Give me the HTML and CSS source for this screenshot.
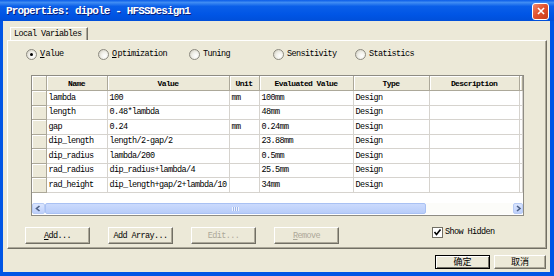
FILE: index.html
```html
<!DOCTYPE html>
<html lang="en">
<head>
<meta charset="UTF-8">
<title>Properties: dipole - HFSSDesign1</title>
<link rel="stylesheet" href="styles.css">
</head>
<body>
    <div class="window">
        <div class="titlebar">
            <span class="title">Properties: dipole - HFSSDesign1</span>
            <span class="close">
                <svg width="16" height="16" viewBox="0 0 16 16">
                    <path d="M4.5 4.5 L11.5 11.5 M11.5 4.5 L4.5 11.5" stroke="#fff" stroke-width="1.8" />
                </svg>
            </span>
        </div>

        <div class="client">
            <div class="tabs">
                <div class="tab">Local Variables</div>
            </div>

            <div class="panel">
                <div class="radios">
                    <label class="radio r1"><span class="dot checked"></span><u>V</u>alue</label>
                    <label class="radio r2"><span class="dot"></span><u>O</u>ptimization</label>
                    <label class="radio r3"><span class="dot"></span>Tuning</label>
                    <label class="radio r4"><span class="dot"></span>Sensitivity</label>
                    <label class="radio"><span class="dot"></span>Statistics</label>
                </div>

                <div class="grid">
                    <table>
                        <colgroup>
                            <col class="c-hdr">
                            <col class="c-name">
                            <col class="c-value">
                            <col class="c-unit">
                            <col class="c-eval">
                            <col class="c-type">
                            <col class="c-desc">
                            <col>
                        </colgroup>
                        <thead>
                            <tr>
                                <th></th>
                                <th>Name</th>
                                <th>Value</th>
                                <th>Unit</th>
                                <th>Evaluated Value</th>
                                <th>Type</th>
                                <th>Description</th>
                                <th></th>
                            </tr>
                        </thead>
                        <tbody>
                            <tr><td class="rh"></td><td>lambda</td><td>100</td><td>mm</td><td>100mm</td><td>Design</td><td></td><td></td></tr>
                            <tr><td class="rh"></td><td>length</td><td>0.48*lambda</td><td></td><td>48mm</td><td>Design</td><td></td><td></td></tr>
                            <tr><td class="rh"></td><td>gap</td><td>0.24</td><td>mm</td><td>0.24mm</td><td>Design</td><td></td><td></td></tr>
                            <tr><td class="rh"></td><td>dip_length</td><td>length/2-gap/2</td><td></td><td>23.88mm</td><td>Design</td><td></td><td></td></tr>
                            <tr><td class="rh"></td><td>dip_radius</td><td>lambda/200</td><td></td><td>0.5mm</td><td>Design</td><td></td><td></td></tr>
                            <tr><td class="rh"></td><td>rad_radius</td><td>dip_radius+lambda/4</td><td></td><td>25.5mm</td><td>Design</td><td></td><td></td></tr>
                            <tr><td class="rh"></td><td>rad_height</td><td>dip_length+gap/2+lambda/10</td><td></td><td>34mm</td><td>Design</td><td></td><td></td></tr>
                        </tbody>
                    </table>
                    <div class="blank"></div>
                    <div class="hscroll">
                        <span class="arrow">
                            <svg width="13" height="11" viewBox="0 0 13 11"><path d="M7.5 3 L4.5 5.5 L7.5 8" fill="none" stroke="#4d6185" stroke-width="1.6" /></svg>
                        </span>
                        <span class="thumb"><span class="grip"></span></span>
                        <span class="track"></span>
                        <span class="arrow right">
                            <svg width="10" height="11" viewBox="0 0 10 11"><path d="M4 3 L7 5.5 L4 8" fill="none" stroke="#4d6185" stroke-width="1.6" /></svg>
                        </span>
                    </div>
                </div>

                <div class="actions">
                    <button class="btn"><u>A</u>dd...</button>
                    <button class="btn">Add Array...</button>
                    <button class="btn" disabled>Edit...</button>
                    <button class="btn" disabled><u>R</u>emove</button>
                    <label class="check"><span class="box">
                        <svg width="9" height="9" viewBox="0 0 9 9"><path d="M1.5 4 L3.5 6.5 L7.5 1.5" fill="none" stroke="#000" stroke-width="1.6" /></svg>
                    </span>Show Hidden</label>
                </div>
            </div>

            <div class="footer">
                <button class="btn default">确定</button>
                <button class="btn cancel">取消</button>
            </div>
        </div>
    </div>
</body>
</html>
```

FILE: styles.css
```css
body {
    margin: 0;
    width: 554px;
    height: 276px;
    overflow: hidden;
    background: #0055e5;
    font-family: "Liberation Mono", "Noto Sans CJK SC", monospace;
    font-size: 8.5px;
    letter-spacing: -0.6px;
    color: #000;
}

.window {
    display: flex;
    flex-direction: column;
    height: 276px;
}

/* title bar */
.titlebar {
    height: 21px;
    flex: none;
    display: flex;
    align-items: center;
    justify-content: space-between;
    padding: 0 5px 0 6px;
    background: linear-gradient(to bottom, #0a5ce8 0%, #3f8cf3 12%, #0a5fe9 30%, #0055e5 70%, #004fd9 100%);
    color: #fff;
}

.title {
    font-size: 11px;
    font-weight: bold;
    letter-spacing: -0.85px;
    text-shadow: 1px 1px 0 #0a1e7a;
}

.close {
    width: 15px;
    height: 15px;
    margin-top: 1px;
    border: 1px solid #fff;
    border-radius: 3px;
    background: linear-gradient(135deg, #f08a6c 0%, #e2522f 45%, #c83a17 100%);
    display: flex;
    align-items: center;
    justify-content: center;
}

.close svg {
    width: 14px;
    height: 14px;
}

/* client area */
.client {
    flex: 1;
    margin: 0 4px 4px 3px;
    background: #ece9d8;
    display: flex;
    flex-direction: column;
}

.tabs {
    padding: 6px 0 0 7px;
    display: flex;
}

.tab {
    height: 12px;
    padding: 0 5px 0 3px;
    line-height: 13px;
    border: 1px solid #fff;
    border-right-color: #716f64;
    border-bottom: none;
    box-shadow: inset -1px 0 #aca899;
}

.panel {
    height: 207px;
    margin: 0 3px 0 4px;
    border: 1px solid #fff;
    border-right-color: #716f64;
    border-bottom-color: #716f64;
    box-shadow: inset -1px -1px #aca899;
    display: flex;
    flex-direction: column;
}

/* option radios */
.radios {
    display: flex;
    margin-top: 8px;
    padding-left: 18px;
    height: 11px;
}

.radio {
    display: flex;
    align-items: center;
    gap: 1px;
    line-height: 11px;
}

.r1 { width: 72px; }
.r2 { width: 91px; }
.r3 { width: 84px; }
.r4 { width: 82px; }

.dot {
    width: 9px;
    height: 9px;
    margin-right: 2px;
    border: 1px solid #8c8a80;
    border-radius: 50%;
    background: radial-gradient(circle at 65% 65%, #fff 0%, #f0efe8 45%, #c9c6b8 100%);
    position: relative;
}

.dot.checked::after {
    content: "";
    position: absolute;
    left: 3px;
    top: 3px;
    width: 3px;
    height: 3px;
    border-radius: 50%;
    background: #000;
}

/* grid */
.grid {
    margin: 15px 0 0 23px;
    width: 491px;
    height: 139px;
    border: 1px solid #8e8c84;
    background: #fff;
    display: flex;
    flex-direction: column;
}

table {
    border-collapse: collapse;
    table-layout: fixed;
    width: 491px;
}

.c-hdr { width: 14px; }
.c-name { width: 61px; }
.c-value { width: 122px; }
.c-unit { width: 30px; }
.c-eval { width: 94px; }
.c-type { width: 76px; }
.c-desc { width: 90px; }

th {
    height: 14px;
    padding: 0;
    font-weight: bold;
    font-size: 8px;
    background: #ece9d8;
    border-right: 1px solid #aca899;
    border-bottom: 1px solid #aca899;
    box-shadow: inset 1px 1px #fff;
    text-align: center;
}

td {
    height: 13.5px;
    padding: 0 0 0 2px;
    border-right: 1px solid #d6d3ce;
    border-bottom: 1px solid #d6d3ce;
    white-space: nowrap;
    overflow: hidden;
}

td.rh {
    padding: 0;
    background: #ece9d8;
    border-right-color: #aca899;
    border-bottom-color: #aca899;
    box-shadow: inset 1px 1px #fff;
}

.blank {
    flex: 1;
}

.hscroll {
    height: 11px;
    margin-bottom: 1px;
    display: flex;
}

.arrow {
    width: 13px;
    height: 11px;
    flex: none;
    box-sizing: border-box;
    border: 1px solid #b7cbf5;
    border-radius: 2px;
    background: linear-gradient(to bottom, #dbe6fe, #bdcffb);
    display: flex;
}

.arrow svg {
    margin: -1px;
}

.arrow.right {
    width: 10px;
}

.thumb {
    width: 381px;
    flex: none;
    box-sizing: border-box;
    border: 1px solid #a9c1f3;
    border-radius: 2px;
    background: linear-gradient(to bottom, #cbdafd, #b8cdf9);
    display: flex;
    align-items: center;
    justify-content: center;
}

.grip {
    width: 7px;
    height: 4px;
    background: repeating-linear-gradient(to right, #eef3fe 0 1px, #9fb7ea 1px 2px);
}

.track {
    flex: 1;
    background: #fcfcf9;
}

/* buttons */
.actions {
    display: flex;
    align-items: flex-start;
    gap: 18px;
    margin-top: 11px;
    padding-left: 17px;
}

.btn {
    width: 65px;
    height: 17px;
    padding: 0;
    font-family: inherit;
    font-size: 8.5px;
    letter-spacing: -0.6px;
    color: #000;
    background: #ece9d8;
    border: 1px solid;
    border-color: #fff #716f64 #716f64 #fff;
    box-shadow: inset -1px -1px #aca899;
}

.btn:disabled {
    color: #aca899;
}

.check {
    display: flex;
    align-items: center;
    margin-left: 75px;
    line-height: 11px;
}

.box {
    width: 9px;
    height: 9px;
    margin-right: 2px;
    border: 1px solid #716f64;
    background: #fff;
    display: flex;
}

/* footer */
.footer {
    display: flex;
    justify-content: flex-end;
    gap: 4px;
    padding: 6px 4px 0 0;
}

.footer .btn {
    height: 14px;
    font-family: "Noto Sans CJK SC", sans-serif;
    font-size: 9px;
    letter-spacing: 0;
    line-height: 12px;
}

.btn.default {
    width: 55px;
    border: 1px solid #000;
    box-shadow: inset 1px 1px #fff, inset -1px -1px #716f64;
}

.btn.cancel {
    width: 52px;
}
```
